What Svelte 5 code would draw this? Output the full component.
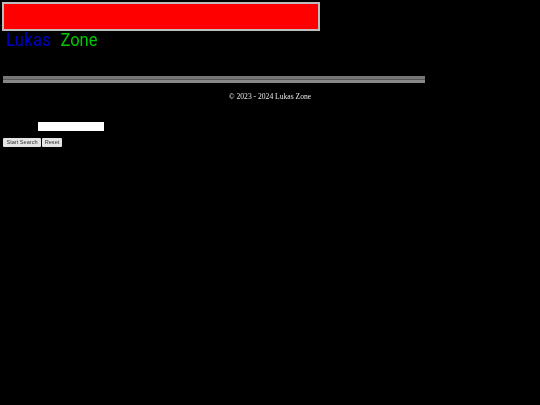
<script>
	let query = '';

	function reset() {
		query = '';
	}
</script>

<div class="page">
	<div class="banner"></div>
	<div class="logo"><span class="blue">Lukas</span><span class="green">Zone</span></div>
	<hr />
	<p class="copy">© 2023 - 2024 Lukas Zone</p>
	<form class="search" on:submit|preventDefault>
		<div class="field"><input type="text" bind:value={query} /></div>
		<div class="buttons">
			<button class="start" type="submit">Start Search</button>
			<button class="clear" type="button" on:click={reset}>Reset</button>
		</div>
	</form>
</div>

<style>
	:global(html), :global(body) {
		margin: 0;
		background: #000;
	}
	.page {
		height: 405px;
		box-sizing: border-box;
		padding: 2px 0 0 0;
		background: #000;
		color: #fff;
		font-family: "Liberation Serif", serif;
		overflow: hidden;
	}
	.banner {
		width: 314px;
		height: 25px;
		margin-left: 2px;
		background: #f00;
		border: 2px solid #bdbdbd;
	}
	.logo {
		display: flex;
		gap: 9.5px;
		margin: -2px 0 0 6px;
		height: 22px;
		line-height: 20px;
		font-family: Roboto, sans-serif;
		font-size: 16.5px;
		transform: scaleY(1.14);
		transform-origin: 0 0;
		will-change: opacity;
	}
	.blue {
		color: #0000c8;
		letter-spacing: 0.3px;
	}
	.green {
		color: #00c800;
	}
	hr {
		width: 422px;
		height: 1px;
		box-sizing: content-box;
		margin: 25px 0 0 3px;
		background: #555;
		border: 0;
		border-top: 3px solid #777;
		border-bottom: 3px solid #888;
	}
	.copy {
		margin: 8px 0 0;
		text-align: center;
		font-size: 7.6px;
		line-height: 11px;
		color: #e6e6e6;
		will-change: opacity;
	}
	.search {
		margin: 20px 0 0 3px;
	}
	.field {
		padding-left: 35px;
		height: 9px;
		display: flex;
	}
	input {
		width: 66px;
		height: 9px;
		box-sizing: border-box;
		padding: 0;
		border: 0;
		background: #fff;
	}
	.buttons {
		display: flex;
		gap: 1px;
		margin-top: 7px;
		will-change: opacity;
	}
	button {
		height: 9px;
		padding: 0;
		box-sizing: border-box;
		border: 0;
		border-radius: 1px;
		background: #e4e4e4;
		color: #333;
		font-family: "Liberation Sans", sans-serif;
		font-size: 5.6px;
		line-height: 9px;
	}
	.start {
		width: 38px;
	}
	.clear {
		width: 20px;
	}
</style>
